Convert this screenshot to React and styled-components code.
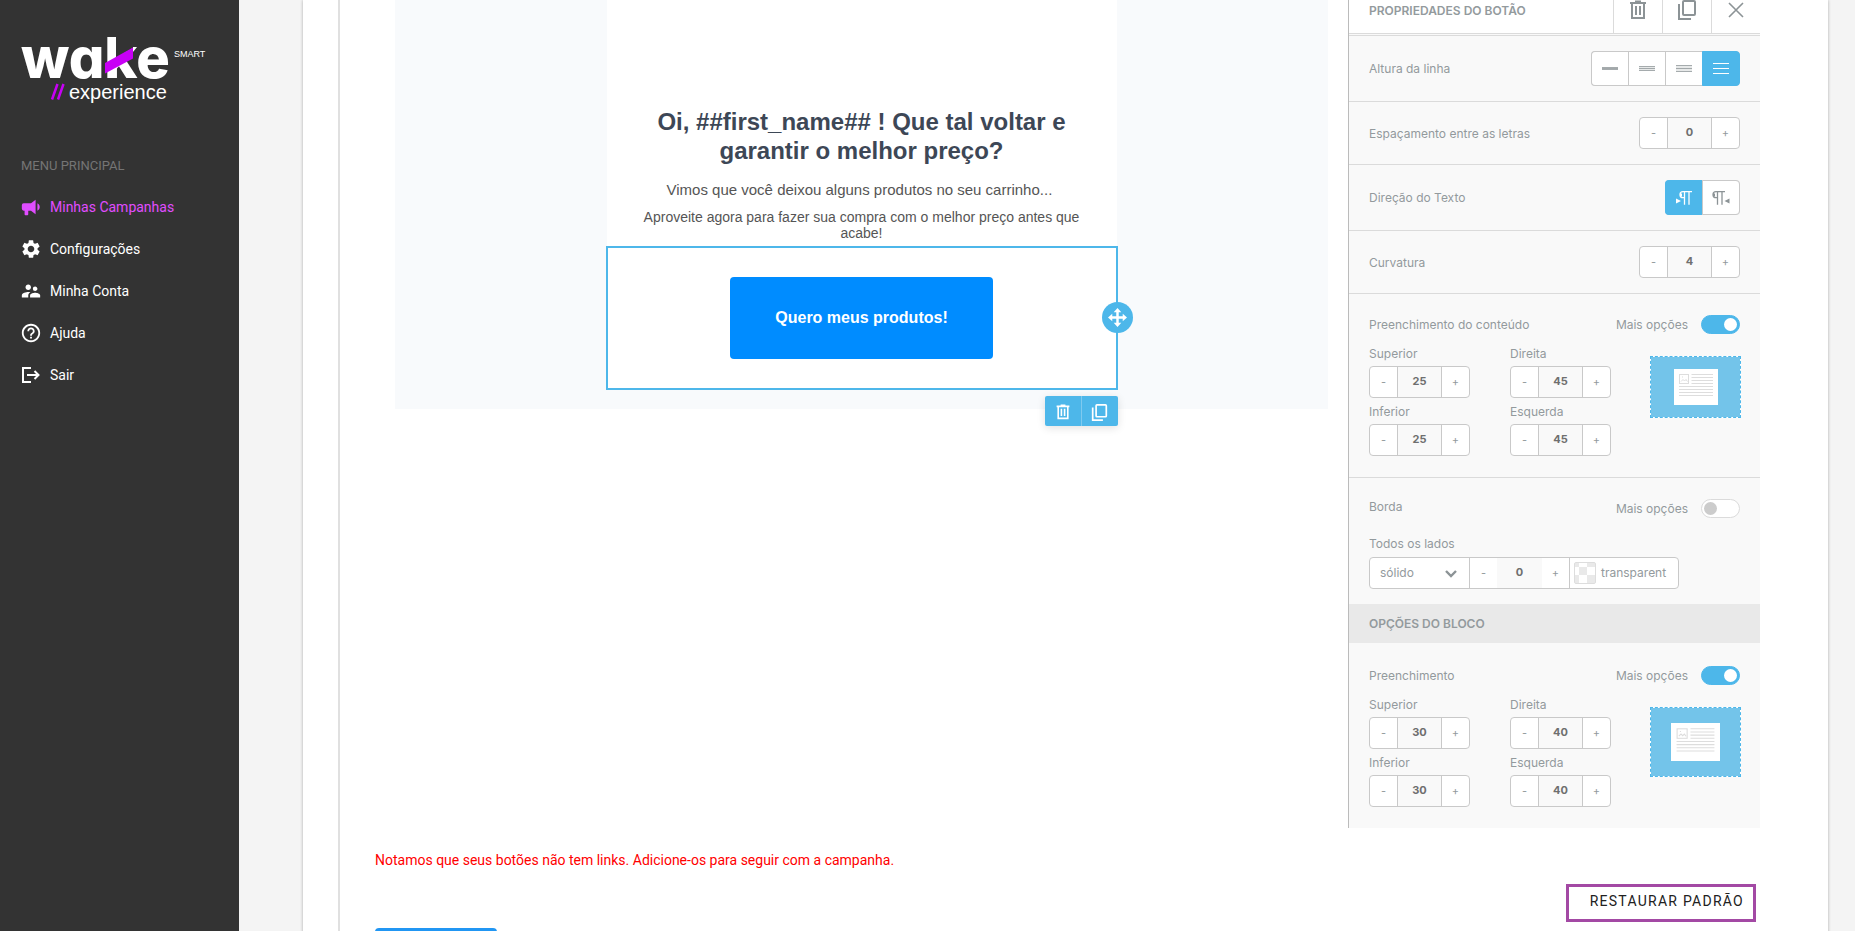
import React, { useState } from 'react'
import styled, { createGlobalStyle } from 'styled-components'
import { MdSettings, MdSupervisorAccount, MdHelpOutline } from 'react-icons/md'

const GlobalStyle = createGlobalStyle`
  *, *::before, *::after {
    box-sizing: border-box;
  }
  :root {
    --blue: #4db7ea;
    --line: #dbdbdb;
    --control: #c9c9c9;
    --label: #939a9d;
  }
  body {
    margin: 0;
    background: #f4f4f4;
    font-family: Roboto, sans-serif;
    font-size: 14px;
  }
  button, input, select {
    font: inherit;
    color: inherit;
    margin: 0;
  }
  button {
    cursor: pointer;
  }
  h1, p {
    margin: 0;
  }
`

/* ---------- shell ---------- */

const Shell = styled.div`
  display: flex;
  height: 100vh;
  overflow: hidden;
`

const Sidebar = styled.aside`
  flex: 0 0 239px;
  padding: 34px 20px;
  background: #333;
`

const Logo = styled.svg`
  display: block;
  width: 190px;
  height: 72px;
  margin-left: 1px;
  overflow: visible;
`

const LogoWord = styled.text`
  fill: #fff;
  font-family: Inter, sans-serif;
  font-size: 56px;
  font-weight: 800;
  font-feature-settings: 'cv11';
`

const LogoSmall = styled.text`
  fill: #fff;
  font-family: 'Liberation Sans', Arial, sans-serif;
  font-size: ${(props) => props.$size}px;
`

const MenuTitle = styled.p`
  margin: 50px 0 0 1px;
  line-height: 20px;
  font-size: 13px;
  color: #757575;
`

const Menu = styled.nav`
  display: flex;
  flex-direction: column;
  margin-top: 10px;
`

const MenuLink = styled.a`
  display: flex;
  align-items: center;
  gap: 8px;
  height: 42px;
  color: ${(props) => (props.$active ? '#e04dff' : '#fff')};
  text-decoration: none;

  svg {
    flex: none;
    width: 22px;
    height: 22px;
  }
`

const Main = styled.main`
  flex: 1;
  min-width: 0;
  padding: 0 27px 0 64px;
`

const Card = styled.div`
  min-height: 100%;
  padding-left: 35px;
  background: #fff;
  box-shadow: 0 0 3px rgba(0, 0, 0, 0.3);
`

const Step = styled.div`
  display: flex;
  flex-direction: column;
  min-height: 100vh;
  padding: 0 68px 0 35px;
  border-left: 2px solid #e0e0e0;
`

const Editor = styled.div`
  display: flex;
  align-items: flex-start;
  gap: 20px;
  padding-left: 20px;
`

/* ---------- e-mail canvas ---------- */

const Canvas = styled.section`
  flex: 1;
  display: flex;
  justify-content: center;
  padding-bottom: 20px;
  background: #f8fafc;
`

const Email = styled.div`
  width: 510px;
  padding-top: 107px;
  background: #fff;
  font-family: 'Liberation Sans', Arial, sans-serif;
  text-align: center;
  color: #555;
`

const EmailTitle = styled.h1`
  padding: 0 35px;
  font-size: 24px;
  line-height: 29px;
  color: #3d4756;
`

const EmailText = styled.p`
  padding: 0 35px;
  margin-top: ${(props) => props.$gap}px;
  font-size: ${(props) => props.$size}px;
  line-height: ${(props) => props.$line}px;
`

const SelectedBlock = styled.div`
  position: relative;
  margin-top: 6px;
  padding: 30px 40px;
  outline: 2px solid var(--blue);
  outline-offset: -1px;
`

const CallToAction = styled.button`
  padding: 25px 45px;
  border: 0;
  border-radius: 4px;
  background: #008cff;
  color: #fff;
  font-size: 16px;
  font-weight: bold;
  line-height: 32px;
  vertical-align: top;
`

const MoveHandle = styled.button`
  position: absolute;
  top: calc(50% - 16px);
  right: -16px;
  display: flex;
  align-items: center;
  justify-content: center;
  width: 31px;
  height: 31px;
  padding: 0;
  border: 0;
  border-radius: 50%;
  background: var(--blue);
  color: #fff;
`

const BlockTools = styled.div`
  position: absolute;
  top: calc(100% + 7px);
  right: -1px;
  display: flex;
  border-radius: 2px;
  background: var(--blue);
  box-shadow: 0 2px 8px rgba(0, 0, 0, 0.12);
`

const BlockTool = styled.button`
  display: flex;
  align-items: center;
  justify-content: center;
  width: 36px;
  height: 30px;
  padding: 2px 0 0;
  border: 0;
  background: none;
  color: #fff;

  & + & {
    width: 37px;
    border-left: 1px solid #7fcaef;
  }
`

/* ---------- properties panel ---------- */

const Panel = styled.aside`
  flex: 0 0 412px;
  border-left: 1px solid #bbb;
  background: #f9f9f9;
  font-family: Inter, sans-serif;
  font-size: 12px;
  line-height: 16px;
  color: var(--label);
`

const PanelHeader = styled.header`
  display: flex;
  height: 34px;
  padding-left: 20px;
  border-bottom: 1px solid var(--line);
  background: #fff;
  font-weight: 600;
`

const PanelName = styled.span`
  flex: 1;
  padding-top: 3px;
`

const PanelAction = styled.button`
  display: flex;
  align-items: flex-start;
  justify-content: center;
  width: 49px;
  padding: 0;
  border: 0;
  border-left: 1px solid var(--line);
  background: none;
  color: #8c9396;
`

const Options = styled.div`
  margin-top: 1px;
  border-top: 1px solid var(--line);
`

const Row = styled.div`
  display: flex;
  align-items: center;
  justify-content: space-between;
  padding: 15px 20px;
  border-bottom: 1px solid var(--line);

  > label {
    padding-top: 2px;
  }
`

const Segments = styled.div`
  display: flex;
  border: 1px solid var(--control);
  border-radius: 4px;
  background: #fff;
`

const Segment = styled.button`
  display: flex;
  align-items: center;
  justify-content: center;
  width: 37px;
  height: 35px;
  margin: -1px 0;
  padding: 0;
  border: solid var(--control);
  border-width: 1px 0;
  background: ${(props) => (props.$active ? 'var(--blue)' : '#fff')};
  border-color: ${(props) => (props.$active ? 'var(--blue)' : 'var(--control)')};
  color: ${(props) => (props.$active ? '#fff' : '#8c9396')};

  & + & {
    border-left-width: 1px;
  }
  &:first-child {
    margin-left: -1px;
    border-left-width: 1px;
    border-radius: 4px 0 0 4px;
  }
  &:last-child {
    width: 38px;
    margin-right: -1px;
    border-right-width: 1px;
    border-radius: 0 4px 4px 0;
  }
`

const StepperBox = styled.div`
  display: flex;
  width: ${(props) => (props.$bare ? 'auto' : '101px')};
  height: ${(props) => (props.$bare ? '30px' : '32px')};
  border: ${(props) => (props.$bare ? '0' : '1px solid var(--control)')};
  border-radius: 4px;
  overflow: hidden;
  background: #fff;

  input {
    width: 45px;
    padding: 0 0 2px;
    border: solid var(--control);
    border-width: ${(props) => (props.$bare ? '0' : '0 1px')};
    border-radius: 0;
    background: #f9f9f9;
    text-align: center;
    font-size: 11px;
    font-weight: 700;
    color: #6f6f6f;
  }
  button {
    width: 27px;
    padding: 0;
    border: 0;
    background: none;
    font-size: 11px;
  }
`

const Section = styled.section`
  padding: 21px 20px;
  border-bottom: ${(props) => (props.$last ? '0' : '1px solid var(--line)')};
  padding-top: ${(props) => (props.$last ? '23px' : '21px')};
`

const SectionHead = styled.div`
  display: flex;
  align-items: ${(props) => (props.$top ? 'flex-start' : 'center')};
  justify-content: space-between;
  height: 19px;
`

const Switch = styled.label`
  display: flex;
  align-items: center;
  gap: 13px;

  input {
    appearance: none;
    width: 39px;
    height: 19px;
    padding: 2px;
    border: 1px solid var(--line);
    border-radius: 10px;
    background: #fff;
  }
  input::before {
    content: '';
    display: block;
    width: 13px;
    height: 13px;
    border-radius: 50%;
    background: #ccc;
  }
  input:checked {
    border-color: var(--blue);
    background: var(--blue);
  }
  input:checked::before {
    margin-left: 20px;
    background: #fff;
  }
`

const PaddingBody = styled.div`
  display: flex;
  justify-content: space-between;
  align-items: flex-start;
  margin-top: 12px;
`

const Sides = styled.div`
  display: grid;
  grid-template-columns: 101px 101px;
  gap: 6px 40px;
`

const Field = styled.div`
  label {
    display: block;
    margin-bottom: 4px;
  }
`

const Preview = styled.div`
  display: flex;
  align-items: center;
  justify-content: center;
  width: 91px;
  height: ${(props) => props.$height}px;
  margin: 10px -1px 0 0;
  border: 1px dashed var(--blue);
  background: linear-gradient(#73c4ea, #73c4ea) padding-box, #fff;
`

const BorderSection = styled.section`
  padding: 21px 20px 15px;
`

const BorderLabel = styled.p`
  margin: 18px 0 5px;
`

const BorderControls = styled.div`
  display: flex;
  width: 310px;
  border: 1px solid var(--control);
  border-radius: 4px;
  background: #fff;
  overflow: hidden;
`

const StyleSelect = styled.div`
  position: relative;
  width: 100px;
  border-right: 1px solid var(--control);

  select {
    appearance: none;
    width: 100%;
    height: 30px;
    padding: 0 10px;
    border: 0;
    background: none;
  }
  svg {
    position: absolute;
    top: 12px;
    right: 12px;
    pointer-events: none;
  }
`

const ColorButton = styled.button`
  display: flex;
  align-items: center;
  gap: 5px;
  flex: 1;
  padding: 0 4px;
  border: 0;
  border-left: 1px solid var(--control);
  background: none;
`

const Swatch = styled.span`
  width: 22px;
  height: 22px;
  border: 1px solid #ddd;
  border-radius: 2px;
  background: repeating-conic-gradient(#fff 0 25%, #e9e9e9 0 50%) 4px 4px / 16px 16px;
`

const SectionTitle = styled.div`
  height: 39px;
  padding: 0 20px;
  background: #e9e9e9;
  font-weight: 600;
  line-height: 39px;
`

/* ---------- footer ---------- */

const Warning = styled.p`
  margin-top: 22px;
  line-height: 20px;
  color: #f00;
`

const Actions = styled.div`
  display: flex;
  justify-content: flex-end;
  margin-top: 14px;
`

const RestoreButton = styled.button`
  height: 38px;
  margin-right: 4px;
  padding: 0 9px 4px 21px;
  border: 3px solid #a349a4;
  background: #fff;
  color: #212121;
  font-weight: 400;
  letter-spacing: 0.09em;
  text-transform: uppercase;
`

const NextButton = styled.button`
  flex: none;
  width: 122px;
  height: 36px;
  margin-top: 6px;
  border: 0;
  border-radius: 4px;
  background: #2196f3;
  color: #fff;
`

/* ---------- icons ---------- */

const TrashIcon = ({ size = 20 }) => (
  <svg width={size} height={size} viewBox="0 0 20 20" fill="none" stroke="currentColor" strokeWidth="2">
    <path d="M2 3h16M7 1.500h6M4 3v15h12V3" />
    <path d="M8 6v9M12 6v9" />
  </svg>
)

const CopyIcon = ({ size = 20 }) => (
  <svg width={size} height={size} viewBox="0 0 20 20" fill="none" stroke="currentColor" strokeWidth="2">
    <rect x="6" y="1" width="12" height="14" rx="1" />
    <path d="M2 4v15h12" />
  </svg>
)

const CloseIcon = () => (
  <svg width="20" height="20" viewBox="0 0 20 20" stroke="currentColor" strokeWidth="1.6">
    <path d="M3 3l14 14M17 3L3 17" />
  </svg>
)

const BullhornIcon = () => (
  <svg viewBox="0 0 24 24" fill="currentColor">
    <path d="M12 8H4a2 2 0 0 0-2 2v4a2 2 0 0 0 2 2h1v4a1 1 0 0 0 1 1h2a1 1 0 0 0 1-1v-4h3l5 4V4l-5 4m9.500 4c0 1.710-.960 3.260-2.500 4V8c1.530.750 2.500 2.300 2.500 4z" />
  </svg>
)

const ExitIcon = () => (
  <svg viewBox="0 0 22 22" fill="none" stroke="currentColor" strokeWidth="2">
    <path d="M11 4H3v14h8M7 11h12M14.500 7l4 4-4 4" />
  </svg>
)

const MoveIcon = () => (
  <svg width="19" height="19" viewBox="0 0 20 20" fill="currentColor">
    <path d="M10 0l4 4.500h-2.700v4.200h4.200V6L20 10l-4.500 4v-2.700h-4.200v4.200H14L10 20l-4-4.500h2.700v-4.200H4.500V14L0 10l4.500-4v2.700h4.200V4.500H6z" />
  </svg>
)

const LinesIcon = ({ gap }) => (
  <svg width="16" height="13" viewBox="0 0 16 13" stroke="currentColor">
    {gap < 5 && <path d="M0 6.500h16" strokeWidth={gap * 2} opacity="0.2" />}
    <path
      d={`M0 ${6.5 - gap}h16M0 6.500h16M0 ${6.5 + gap}h16`}
      opacity={gap === 5 ? 1 : 0.75}
    />
  </svg>
)

const ParagraphIcon = ({ rtl }) => (
  <svg width="18" height="16" viewBox="0 0 18 16" fill="none" stroke="currentColor" strokeWidth="1.3">
    <g transform={rtl ? 'translate(-4 0)' : undefined}>
      <path d="M17 1.700H8a3 3 0 0 0 0 6h1.500M9.500 1.700v13M14 1.700v13" />
      <path d="M6 3.500v3" strokeWidth="2" />
    </g>
    <path d={rtl ? 'M17.500 8.500v5l-5-2.500z' : 'M1 8.500v5l5-2.500z'} fill="currentColor" stroke="none" />
  </svg>
)

const Chevron = () => (
  <svg width="12" height="8" viewBox="0 0 12 8" fill="none" stroke="#8c9396" strokeWidth="2.400">
    <path d="M1 1l5 5 5-5" />
  </svg>
)

const PageIcon = ({ width, height }) => (
  <svg width={width} height={height} viewBox="0 0 44 36" preserveAspectRatio="none" fill="none" stroke="#ddd">
    <path d="M0 0h44v36H0z" fill="#fff" stroke="none" />
    <rect x="5.500" y="5.500" width="9" height="9" />
    <path d="M7 12.500l2-2 1.500 1.500 1.500-1.500 1.500 2M8 8h1" />
    <path d="M17.500 5.500H39M17.500 8.500H39M17.500 11.500H39M17.500 14.500H39M5 17.500h34M5 20.500h34M5 23.500h34M5 26.500h34" />
  </svg>
)

const WakeLogo = () => (
  <Logo viewBox="0 0 190 72" role="img" aria-label="wake experience smart">
    <LogoWord x="0" y="44">
      wake
    </LogoWord>
    {/* the purple bar takes the place of the upper arm of the k */}
    <path d="M95 2h17v12L95 24z" fill="#333" />
    <path d="M84 29l28-15.500v11L84 39.500z" fill="#c800f5" />
    <path d="M31 65.500L36.500 50M37 65.500L42.500 50" stroke="#c800f5" strokeWidth="2.500" />
    <LogoSmall x="48" y="65" $size={20}>
      experience
    </LogoSmall>
    <LogoSmall x="153" y="23" $size={9}>
      SMART
    </LogoSmall>
  </Logo>
)

/* ---------- parts ---------- */

const Stepper = ({ value, id, label, bare }) => {
  const [count, setCount] = useState(value)
  return (
    <StepperBox $bare={bare}>
      <button type="button" aria-label="Diminuir" onClick={() => setCount(count - 1)}>
        -
      </button>
      <input
        id={id}
        aria-label={label}
        value={count}
        onChange={(e) => setCount(Number(e.target.value) || 0)}
      />
      <button type="button" aria-label="Aumentar" onClick={() => setCount(count + 1)}>
        +
      </button>
    </StepperBox>
  )
}

const MoreOptions = ({ on }) => (
  <Switch>
    Mais opções
    <input type="checkbox" defaultChecked={on} />
  </Switch>
)

const PaddingSection = ({ id, title, vertical, horizontal, previewHeight, page, last }) => {
  const sides = [
    ['Superior', vertical],
    ['Direita', horizontal],
    ['Inferior', vertical],
    ['Esquerda', horizontal],
  ]
  return (
    <Section $last={last}>
      <SectionHead>
        <span>{title}</span>
        <MoreOptions on />
      </SectionHead>
      <PaddingBody>
        <Sides>
          {sides.map(([side, value]) => (
            <Field key={side}>
              <label htmlFor={`${id}-${side}`}>{side}</label>
              <Stepper id={`${id}-${side}`} value={value} />
            </Field>
          ))}
        </Sides>
        <Preview $height={previewHeight}>
          <PageIcon width={page[0]} height={page[1]} />
        </Preview>
      </PaddingBody>
    </Section>
  )
}

const menu = [
  { name: 'Minhas Campanhas', icon: BullhornIcon, active: true },
  { name: 'Configurações', icon: MdSettings },
  { name: 'Minha Conta', icon: MdSupervisorAccount },
  { name: 'Ajuda', icon: MdHelpOutline },
  { name: 'Sair', icon: ExitIcon },
]

export default function App() {
  return (
    <Shell>
      <GlobalStyle />
      <Sidebar>
        <WakeLogo />
        <MenuTitle>MENU PRINCIPAL</MenuTitle>
        <Menu>
          {menu.map(({ name, icon: Icon, active }) => (
            <MenuLink key={name} href="#" $active={active}>
              <Icon />
              {name}
            </MenuLink>
          ))}
        </Menu>
      </Sidebar>
      <Main>
        <Card>
          <Step>
            <Editor>
              <Canvas>
                <Email>
                  <EmailTitle>
                    Oi, ##first_name## ! Que tal voltar e garantir o melhor preço?
                  </EmailTitle>
                  <EmailText $gap={16} $size={15} $line={18}>
                    Vimos que você deixou alguns produtos no seu carrinho...&nbsp;
                  </EmailText>
                  <EmailText $gap={10} $size={14} $line={16}>
                    Aproveite agora para fazer sua compra com o melhor preço antes que acabe!
                  </EmailText>
                  <SelectedBlock>
                    <CallToAction type="button">Quero meus produtos!</CallToAction>
                    <MoveHandle type="button" aria-label="Mover">
                      <MoveIcon />
                    </MoveHandle>
                    <BlockTools>
                      <BlockTool type="button" aria-label="Excluir bloco">
                        <TrashIcon size={16} />
                      </BlockTool>
                      <BlockTool type="button" aria-label="Duplicar bloco">
                        <CopyIcon size={17} />
                      </BlockTool>
                    </BlockTools>
                  </SelectedBlock>
                </Email>
              </Canvas>

              <Panel>
                <PanelHeader>
                  <PanelName>PROPRIEDADES DO BOTÃO</PanelName>
                  <PanelAction type="button" aria-label="Excluir">
                    <TrashIcon />
                  </PanelAction>
                  <PanelAction type="button" aria-label="Duplicar">
                    <CopyIcon />
                  </PanelAction>
                  <PanelAction type="button" aria-label="Fechar">
                    <CloseIcon />
                  </PanelAction>
                </PanelHeader>
                <Options>
                  <Row>
                    <span>Altura da linha</span>
                    <Segments>
                      {[1, 2, 3, 5].map((gap) => (
                        <Segment key={gap} type="button" $active={gap === 5} aria-label={`Altura ${gap}`}>
                          <LinesIcon gap={gap} />
                        </Segment>
                      ))}
                    </Segments>
                  </Row>
                  <Row>
                    <label htmlFor="spacing">Espaçamento entre as letras</label>
                    <Stepper id="spacing" value={0} />
                  </Row>
                  <Row>
                    <span>Direção do Texto</span>
                    <Segments>
                      <Segment type="button" $active aria-label="Esquerda para direita">
                        <ParagraphIcon />
                      </Segment>
                      <Segment type="button" aria-label="Direita para esquerda">
                        <ParagraphIcon rtl />
                      </Segment>
                    </Segments>
                  </Row>
                  <Row>
                    <label htmlFor="radius">Curvatura</label>
                    <Stepper id="radius" value={4} />
                  </Row>
                  <PaddingSection
                    id="content"
                    title="Preenchimento do conteúdo"
                    vertical={25}
                    horizontal={45}
                    previewHeight={62}
                    page={[44, 36]}
                  />
                  <BorderSection>
                    <SectionHead $top>
                      <span>Borda</span>
                      <MoreOptions />
                    </SectionHead>
                    <BorderLabel>Todos os lados</BorderLabel>
                    <BorderControls>
                      <StyleSelect>
                        <select aria-label="Estilo da borda">
                          <option>sólido</option>
                        </select>
                        <Chevron />
                      </StyleSelect>
                      <Stepper bare label="Largura da borda" value={0} />
                      <ColorButton type="button">
                        <Swatch />
                        transparent
                      </ColorButton>
                    </BorderControls>
                  </BorderSection>
                  <SectionTitle>OPÇÕES DO BLOCO</SectionTitle>
                  <PaddingSection
                    id="block"
                    title="Preenchimento"
                    vertical={30}
                    horizontal={40}
                    previewHeight={70}
                    page={[49, 38]}
                    last
                  />
                </Options>
              </Panel>
            </Editor>

            <Warning>
              Notamos que seus botões não tem links. Adicione-os para seguir com a campanha.
            </Warning>
            <Actions>
              <RestoreButton type="button">Restaurar padrão</RestoreButton>
            </Actions>
            <NextButton type="button" aria-label="Avançar" />
          </Step>
        </Card>
      </Main>
    </Shell>
  )
}
